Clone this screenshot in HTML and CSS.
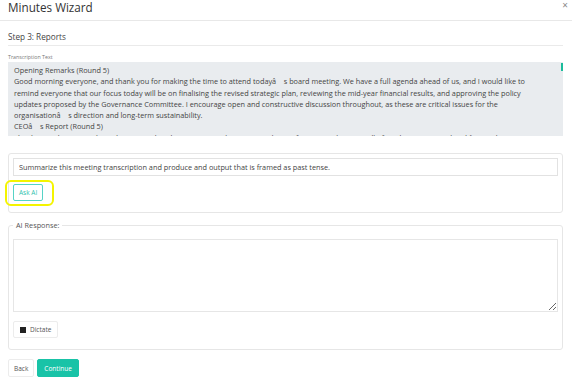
FILE: index.html
```html
<!DOCTYPE html>
<html lang="en">
<head>
  <meta charset="UTF-8">
  <title>Minutes Wizard</title>
  <link rel="stylesheet" href="styles.css">
</head>
<body>

<div class="modal">
  <div class="modal-header">
    <h1 class="modal-title">Minutes Wizard</h1>
    <span class="close">&times;</span>
  </div>

  <div class="modal-body">
    <h2 class="step-title">Step 3: Reports</h2>

    <label class="field-label">Transcription Text</label>
    <div class="transcript-wrap">
      <div class="transcript">
        <p>Opening Remarks (Round 5)</p>
        <p>Good morning everyone, and thank you for making the time to attend todayâ&nbsp;&nbsp;&nbsp; s board meeting. We have a full agenda ahead of us, and I would like to remind everyone that our focus today will be on finalising the revised strategic plan, reviewing the mid-year financial results, and approving the policy updates proposed by the Governance Committee. I encourage open and constructive discussion throughout, as these are critical issues for the organisationâ&nbsp;&nbsp;&nbsp; s direction and long-term sustainability.</p>
        <p>CEOâ&nbsp;&nbsp;&nbsp; s Report (Round 5)</p>
        <p>Thank you, Chair. I am pleased to report that the organisation has continued to perform strongly across all of our key operational and financial areas.</p>
      </div>
      <span class="scroll-thumb"></span>
    </div>

    <div class="card">
      <input class="prompt" type="text" value="Summarize this meeting transcription and produce and output that is framed as past tense.">
      <div class="ask-row">
        <button class="btn btn-outline">Ask AI</button>
        <span class="highlight"></span>
      </div>
    </div>

    <fieldset class="response">
      <legend>AI Response:</legend>
      <textarea class="response-text"></textarea>
      <button class="btn btn-light"><span class="stop-icon"></span>Dictate</button>
    </fieldset>

    <div class="actions">
      <button class="btn btn-light">Back</button>
      <button class="btn btn-primary">Continue</button>
    </div>
  </div>
</div>

</body>
</html>
```

FILE: styles.css
```css
* {
  box-sizing: border-box;
}

body {
  margin: 0;
  background-color: #fff;
  font-family: "Open Sans", "Noto Sans", sans-serif;
  color: #444;
}

.modal {
  width: 572px;
}

.modal-header {
  display: flex;
  justify-content: space-between;
  align-items: flex-start;
  height: 21px;
  padding: 0 4px 0 8px;
  border-bottom: 1px solid #e8e8e8;
}

.modal-title {
  margin: 0;
  font-size: 11.7px;
  font-weight: 400;
  line-height: 14px;
  color: #333;
}

.close {
  margin-top: -1px;
  font-size: 10px;
  line-height: 12px;
  color: #888;
}

.modal-body {
  padding: 0 9px 0 8px;
}

.step-title {
  margin: 11px 0 0;
  padding-bottom: 3px;
  font-size: 8.2px;
  font-weight: 400;
  line-height: 10px;
  color: #444;
  border-bottom: 1px solid #eaeaea;
}

.field-label {
  display: block;
  margin-top: 8px;
  font-size: 5.3px;
  line-height: 7px;
  color: #777;
}

.transcript-wrap {
  position: relative;
  height: 74px;
  margin-top: 1px;
}

.transcript {
  height: 74px;
  overflow: hidden;
  padding: 3px 28px 0 6px;
  background-color: #e9ecef;
  font-size: 7.3px;
  line-height: 11.3px;
  color: #444;
}

.transcript p {
  margin: 0;
}

.scroll-thumb {
  position: absolute;
  top: 1px;
  right: 0;
  width: 2px;
  height: 8px;
  background-color: #1bbc9b;
}

.card {
  margin-top: 17px;
  padding: 4px 4px 11px;
  border: 1px solid #e6e6e6;
  border-radius: 3px;
}

.prompt {
  display: block;
  width: 100%;
  height: 18px;
  margin: 0;
  padding: 0 5px;
  border: 1px solid #e2e2e2;
  font-family: inherit;
  font-size: 7.3px;
  color: #444;
}

.ask-row {
  position: relative;
  display: flex;
  margin-top: 8px;
  height: 17px;
}

.highlight {
  position: absolute;
  left: -8px;
  top: -4px;
  width: 49px;
  height: 26px;
  border: 2.5px solid #f4f400;
  border-radius: 6px;
}

.btn {
  height: 17px;
  padding: 0 5px;
  border-radius: 2px;
  font-family: inherit;
  font-size: 6.5px;
  cursor: pointer;
}

.btn-outline {
  background-color: #fff;
  border: 1px solid #56d3c6;
  color: #2fbfae;
}

.btn-light {
  background-color: #fff;
  border: 1px solid #ececec;
  color: #555;
}

.btn-primary {
  background-color: #19c3a7;
  border: 1px solid #19c3a7;
  color: #fff;
}

.response {
  margin: 7px 0 0;
  padding: 9px 4px 11px;
  border: 1px solid #e6e6e6;
  border-radius: 3px;
}

.response legend {
  margin-left: 0;
  padding: 0 3px;
  font-size: 7.3px;
  color: #555;
}

.response-text {
  display: block;
  width: 100%;
  height: 73px;
  margin: 0;
  border: 1px solid #e6e6e6;
  font-family: inherit;
}

.response .btn-light {
  display: flex;
  align-items: center;
  gap: 4px;
  margin-top: 9px;
  padding: 0 6px;
}

.stop-icon {
  width: 6px;
  height: 6px;
  background-color: #222;
}

.actions {
  display: flex;
  gap: 3px;
  margin-top: 9px;
}

.actions .btn {
  height: 18px;
}

.actions .btn-primary {
  padding: 0 6px;
}
```
